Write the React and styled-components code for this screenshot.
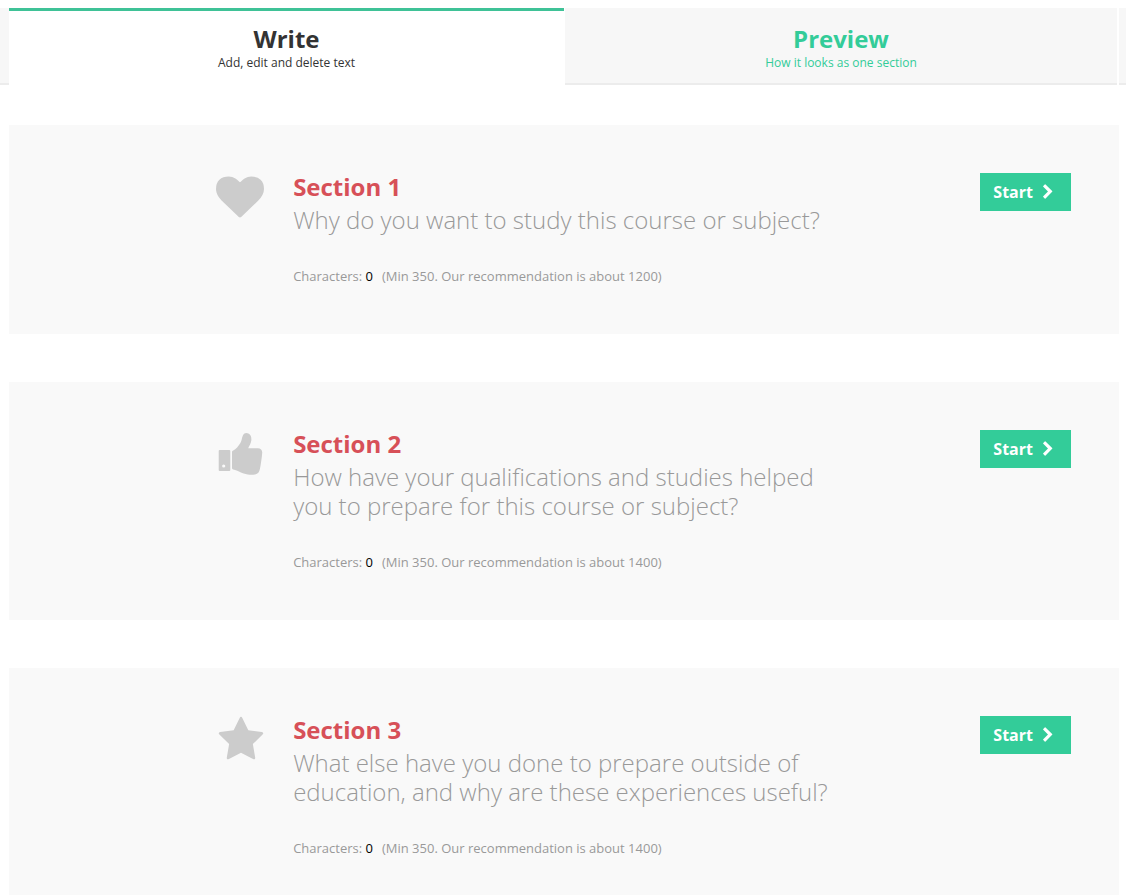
import React from "react";
import styled, { createGlobalStyle } from "styled-components";

const GlobalStyle = createGlobalStyle`
  * { box-sizing: border-box; }
  body {
    margin: 0;
    background: #fff;
    color: #333;
    font-family: "Open Sans", "Noto Sans", sans-serif;
  }
`;

const Page = styled.div`
  padding-top: 8px;
`;

const TabBar = styled.nav`
  display: flex;
  padding: 0 7px 0 9px;
  background: linear-gradient(#f7f7f7, #f7f7f7) top / 100% 75px no-repeat #ececec;
`;

const Tab = styled.button`
  flex: 1 1 ${(p) => (p.$active ? 4 : 2)}px;
  height: 77px;
  padding: 0 0 14px;
  display: flex;
  flex-direction: column;
  align-items: center;
  justify-content: flex-end;
  font: inherit;
  cursor: pointer;
  border: 0 solid #fff;
  border-right-width: ${(p) => (p.$active ? 1 : 2)}px;
  color: ${(p) => (p.$active ? "#333" : "#33cc99")};
  background: ${(p) => (p.$active ? "#fff" : "transparent")};
  box-shadow: ${(p) => (p.$active ? "inset 0 3px #3fc297" : "none")};
`;

const TabTitle = styled.span`
  font-size: 24px;
  line-height: 32px;
  font-weight: 700;
`;

const TabHint = styled.span`
  font-size: 12px;
  line-height: 16px;
`;

const Sections = styled.main`
  display: flex;
  flex-direction: column;
  gap: 48px;
  padding: 40px 7px 0 9px;
`;

const Card = styled.section`
  display: grid;
  grid-template-columns: 17fr 40fr 16fr;
  align-items: start;
  padding: 48px;
  background: #f9f9f9;
`;

const IconCell = styled.div`
  display: flex;
  justify-content: flex-end;
  padding-right: 29px;
`;

const Glyph = styled.svg`
  display: block;
  width: ${(p) => p.$size}px;
  height: ${(p) => p.$size}px;
  fill: ${(p) => p.$color};
`;

const SectionTitle = styled.h2`
  margin: 0 0 5px;
  font-size: 24px;
  line-height: 27px;
  font-weight: 700;
  color: #d75058;
`;

const Question = styled.p`
  margin: 0 0 32px;
  font-size: 24px;
  line-height: 29px;
  font-weight: 300;
  color: #999;
`;

const Counter = styled.p`
  margin: 0;
  font-size: 13px;
  line-height: 20px;
  color: #999;
`;

const Count = styled.span`
  margin-right: 9px;
  color: #000;
`;

const StartButton = styled.button`
  justify-self: end;
  display: flex;
  align-items: center;
  gap: 7px;
  height: 38px;
  padding: 0 15px 0 13px;
  border: 0;
  background: #33cc99;
  color: #fff;
  font: inherit;
  font-size: 16px;
  line-height: 22px;
  font-weight: 700;
  cursor: pointer;
`;

const icons = {
  heart: {
    viewBox: "0 0 1792 1792",
    d: "M896 1664q-26 0-44-18l-624-602q-10-8-27.5-26t-55.5-65.5-68-97.5-53.5-121-23.5-138q0-220 127-344t351-124q62 0 126.5 21.5t120 58 95.5 68.5 76 68q36-36 76-68t95.5-68.5 120-58 126.5-21.5q224 0 351 124t127 344q0 221-229 450l-623 600q-18 18-44 18z",
  },
  thumb: {
    viewBox: "0 0 48 48",
    d: "M3.7 20H13.3Q14.3 20 14.3 21V40Q14.3 41 13.3 41H3.7Q2.7 41 2.7 40V21Q2.7 20 3.7 20ZM7.7 34.4A1.6 1.6 0 1 0 7.7 37.6A1.6 1.6 0 1 0 7.7 34.4ZM16 22Q16 20.8 17.2 20.4C20 19.4 22.4 16 24.4 13C26 10.4 25.6 7.8 27 5.2C28.2 2.9 30.4 2.6 32.4 3.6C35 4.8 35.6 7.6 35.3 10.6C35 13.4 33.4 15.8 32.2 18.2H41.8C44.8 18.2 46.5 20.2 46.2 23C46 26 45.6 29 45.1 32C44.6 35 44.3 38 43.4 40.8C42.4 43.6 40.4 44.6 37.4 44.8C34 45 30.6 44.4 27.6 43.4C24 42.2 21 40.2 17.2 39.5Q16 39.2 16 38Z",
  },
  star: {
    viewBox: "-37 0 1792 1792",
    d: "M1728 647q0 22-26 48l-363 354 86 500q1 7 1 20 0 21-10.5 35.5t-30.5 14.5q-19 0-40-12l-449-236-449 236q-22 12-40 12-21 0-31.5-14.5t-10.5-35.5q0-6 2-20l86-500-364-354q-25-27-25-48 0-37 56-46l502-73 225-455q19-41 49-41t49 41l225 455 502 73q56 9 56 46z",
  },
  chevron: {
    viewBox: "0 0 1792 1792",
    d: "M1363 877l-742 742q-19 19-45 19t-45-19l-166-166q-19-19-19-45t19-45l531-531-531-531q-19-19-19-45t19-45l166-166q19-19 45-19t45 19l742 742q19 19 19 45t-19 45z",
  },
};

function Icon({ name, size, color }) {
  const { viewBox, d } = icons[name];
  return (
    <Glyph $size={size} $color={color} viewBox={viewBox} aria-hidden="true">
      <path fillRule="evenodd" d={d} />
    </Glyph>
  );
}

const sections = [
  {
    icon: "heart",
    title: "Section 1",
    question: "Why do you want to study this course or subject?",
    advice: "(Min 350. Our recommendation is about 1200)",
  },
  {
    icon: "thumb",
    title: "Section 2",
    question:
      "How have your qualifications and studies helped you to prepare for this course or subject?",
    advice: "(Min 350. Our recommendation is about 1400)",
  },
  {
    icon: "star",
    title: "Section 3",
    question:
      "What else have you done to prepare outside of education, and why are these experiences useful?",
    advice: "(Min 350. Our recommendation is about 1400)",
  },
];

export default function App() {
  return (
    <Page>
      <GlobalStyle />
      <TabBar>
        <Tab type="button" $active aria-current="page">
          <TabTitle>Write</TabTitle>
          <TabHint>Add, edit and delete text</TabHint>
        </Tab>
        <Tab type="button">
          <TabTitle>Preview</TabTitle>
          <TabHint>How it looks as one section</TabHint>
        </Tab>
      </TabBar>
      <Sections>
        {sections.map((s) => (
          <Card key={s.title}>
            <IconCell>
              <Icon name={s.icon} size={48} color="#ccc" />
            </IconCell>
            <div>
              <SectionTitle>{s.title}</SectionTitle>
              <Question>{s.question}</Question>
              <Counter>
                Characters: <Count>0</Count>
                {s.advice}
              </Counter>
            </div>
            <StartButton type="button">
              Start
              <Icon name="chevron" size={16} color="#fff" />
            </StartButton>
          </Card>
        ))}
      </Sections>
    </Page>
  );
}
